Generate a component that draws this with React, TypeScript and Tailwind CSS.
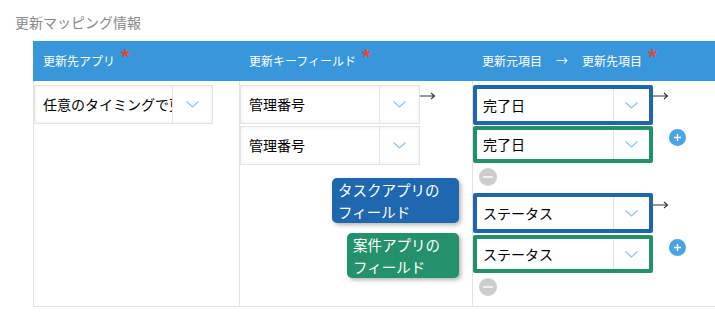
import React from "react";

const font = { fontFamily: '"Noto Sans CJK JP", "Noto Sans", sans-serif' };

function Chevron() {
    return (
        <svg width="13" height="7" viewBox="0 0 13 7">
            <path d="M0.5 0.5L6.5 6L12.5 0.5" fill="none" stroke="#8ec3ea" strokeWidth="1.2" />
        </svg>
    );
}

function Arrow({ color = "#333" }: { color?: string }) {
    return (
        <svg width="16" height="8" viewBox="0 0 16 8">
            <path d="M0 4H14.5M11 1l3.5 3L11 7" fill="none" stroke={color} strokeWidth="1.1" />
        </svg>
    );
}

function Select({ text, className = "" }: { text: string; className?: string }) {
    return (
        <div className={"flex bg-white border border-[#e3e3e3] shadow-[inset_0_0_4px_rgba(0,0,0,0.07)] " + className}>
            <div className="flex-1 flex items-center pl-[8px] overflow-hidden whitespace-nowrap text-[14px] text-black">
                {text}
            </div>
            <div className="w-[40px] border-l border-[#e3e3e3] flex items-center justify-center">
                <Chevron />
            </div>
        </div>
    );
}

function Framed({ text, tone, className = "" }: { text: string; tone: "blue" | "green"; className?: string }) {
    return (
        <div
            className={
                "flex w-[180px] bg-white border-[4px] rounded-[2px] " +
                (tone === "blue" ? "border-[#1f66ac] " : "border-[#23906b] ") +
                className
            }
        >
            <div className="flex-1 flex items-center pl-[6px] text-[14px] text-black whitespace-nowrap">{text}</div>
            <div className="w-[36px] border-l border-[#e3e3e3] flex items-center justify-center">
                <Chevron />
            </div>
        </div>
    );
}

function Plus() {
    return (
        <div className="w-[17px] h-[17px] rounded-full bg-[#4aa3e2] flex items-center justify-center">
            <svg width="9" height="9" viewBox="0 0 9 9">
                <path d="M4.5 1V8M1 4.5H8" stroke="white" strokeWidth="1.4" />
            </svg>
        </div>
    );
}

function Minus() {
    return (
        <div className="w-[18px] h-[18px] rounded-full bg-[#cdcdcd] flex items-center justify-center">
            <svg width="10" height="2" viewBox="0 0 10 2">
                <path d="M0 1H10" stroke="white" strokeWidth="1.4" />
            </svg>
        </div>
    );
}

function Req() {
    return (
        <span className="text-[#e0473a] text-[21px] font-bold leading-none ml-[5px] relative -top-[4px]">*</span>
    );
}

function Group({ text, second }: { text: string; second?: boolean }) {
    return (
        <div className={"flex flex-col " + (second ? "mt-[7px]" : "")}>
            <div className="flex items-start">
                <Framed text={text} tone="blue" className="h-[40px]" />
                <div className={second ? "mt-[8px]" : "mt-[7px]"}>
                    <Arrow />
                </div>
            </div>
            <div className={"flex items-start " + (second ? "mt-[2px]" : "mt-[1px]")}>
                <Framed text={text} tone="green" className={second ? "h-[38px]" : "h-[37px]"} />
                <div className={"ml-[16px] " + (second ? "mt-[4px]" : "mt-[3px]")}>
                    <Plus />
                </div>
            </div>
            <div className="ml-[6px] mt-[5px]">
                <Minus />
            </div>
        </div>
    );
}

export default function App() {
    return (
        <div className="w-[715px] h-[326px] bg-white overflow-hidden" style={font}>
            <div className="pl-[15px] pt-[12px] text-[14px] leading-[20px] text-[#888]">更新マッピング情報</div>
            <div className="ml-[33px] mt-[9px]">
                <div className="flex h-[40px] bg-[#3797da] text-white text-[12px]">
                    <div className="w-[206px] pl-[10px] flex items-center">
                        更新先アプリ
                        <Req />
                    </div>
                    <div className="w-[233px] pl-[10px] flex items-center">
                        更新キーフィールド
                        <Req />
                    </div>
                    <div className="flex-1 pl-[10px] flex items-center">
                        更新元項目
                        <span className="mx-[14px] text-[12px]">→</span>
                        更新先項目
                        <Req />
                    </div>
                </div>
                <div className="flex h-[226px] border-l border-b border-[#e3e3e3]">
                    <div className="w-[206px] border-r border-[#e3e3e3] pt-[4px]">
                        <Select text="任意のタイミングで更新" className="w-[179px] h-[39px]" />
                    </div>
                    <div className="w-[233px] border-r border-[#e3e3e3] pt-[4px] flex flex-col">
                        <div className="flex items-start">
                            <Select text="管理番号" className="w-[180px] h-[39px]" />
                            <div className="mt-[7px]">
                                <Arrow />
                            </div>
                        </div>
                        <Select text="管理番号" className="w-[180px] h-[39px] mt-[2px]" />
                        <div className="flex flex-col items-end pr-[13px]">
                            <div className="mt-[13px] w-[127px] h-[45px] rounded-[5px] bg-[#1f67ae] text-white text-[14.5px] leading-[22px] px-[6px] py-px shadow-[2px_2px_4px_rgba(0,0,0,0.3)]">
                                タスクアプリの
                                <br />
                                フィールド
                            </div>
                            <div className="mt-[10px] w-[112px] h-[45px] rounded-[5px] bg-[#24916c] text-white text-[14.5px] leading-[22px] px-[6px] py-px shadow-[2px_2px_4px_rgba(0,0,0,0.3)]">
                                案件アプリの
                                <br />
                                フィールド
                            </div>
                        </div>
                    </div>
                    <div className="flex-1 pt-[4px]">
                        <Group text="完了日" />
                        <Group text="ステータス" second />
                    </div>
                </div>
            </div>
        </div>
    );
}
